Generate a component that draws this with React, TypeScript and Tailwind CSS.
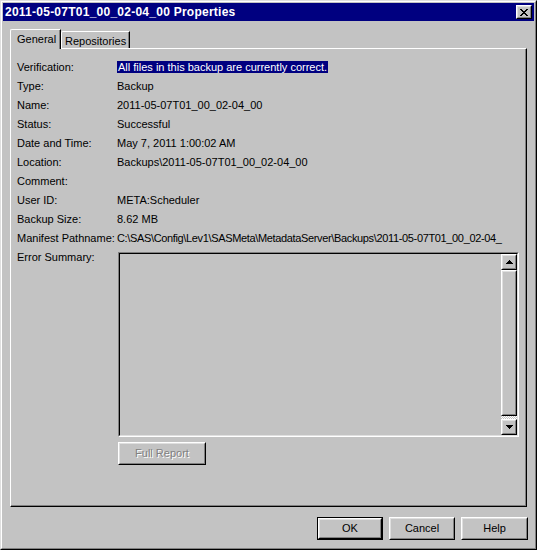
import type { ReactNode } from 'react'

const ROWS: [string, ReactNode][] = [
  ['Verification:', <span className="bg-[#000080] px-px text-white">All files in this backup are currently correct.</span>],
  ['Type:', 'Backup'],
  ['Name:', '2011-05-07T01_00_02-04_00'],
  ['Status:', 'Successful'],
  ['Date and Time:', 'May 7, 2011 1:00:02 AM'],
  ['Location:', 'Backups\\2011-05-07T01_00_02-04_00'],
  ['Comment:', ''],
  ['User ID:', 'META:Scheduler'],
  ['Backup Size:', '8.62 MB'],
  [
    'Manifest Pathname:',
    <span className="tracking-[-0.35px]">C:\SAS\Config\Lev1\SASMeta\MetadataServer\Backups\2011-05-07T01_00_02-04_</span>,
  ],
]

// classic raised bevel: outer white/black, inner light/dark gray
function Raised({ className = '', children }: { className?: string; children?: ReactNode }) {
  return (
    <div className={`border border-t-white border-l-white border-r-black border-b-black ${className}`}>
      <div className="flex h-full w-full items-center justify-center border border-t-[#dfdfdf] border-l-[#dfdfdf] border-r-[#808080] border-b-[#808080]">
        {children}
      </div>
    </div>
  )
}

function Arrow({ down }: { down?: boolean }) {
  return (
    <svg width="7" height="4" viewBox="0 0 7 4" shapeRendering="crispEdges" className={down ? 'rotate-180' : ''}>
      <rect x="3" y="0" width="1" height="1" fill="#000" />
      <rect x="2" y="1" width="3" height="1" fill="#000" />
      <rect x="1" y="2" width="5" height="1" fill="#000" />
      <rect x="0" y="3" width="7" height="1" fill="#000" />
    </svg>
  )
}

function CloseGlyph() {
  const px = [
    [0, 0], [1, 0], [6, 0], [7, 0],
    [1, 1], [2, 1], [5, 1], [6, 1],
    [2, 2], [3, 2], [4, 2], [5, 2],
    [3, 3], [4, 3],
    [2, 4], [3, 4], [4, 4], [5, 4],
    [1, 5], [2, 5], [5, 5], [6, 5],
    [0, 6], [1, 6], [6, 6], [7, 6],
  ]
  return (
    <svg width="8" height="7" viewBox="0 0 8 7" shapeRendering="crispEdges">
      {px.map(([x, y]) => (
        <rect key={`${x}-${y}`} x={x} y={y} width="1" height="1" fill="#000" />
      ))}
    </svg>
  )
}

export default function App() {
  return (
    <div className="h-[550px] w-[537px] bg-[#c3c3c3] font-['Liberation_Sans',Arial,sans-serif] text-[11px] text-black">
      {/* window frame */}
      <div className="h-full w-full border border-t-[#dfdfdf] border-l-[#dfdfdf] border-r-black border-b-black">
        <div className="flex h-full w-full flex-col border border-t-white border-l-white border-r-[#808080] border-b-[#808080] p-px">
          {/* Title bar */}
          <div className="flex h-[18px] shrink-0 items-center justify-between bg-[#000080] pl-[2px] pr-[2px]">
            <span className="text-[12px] font-bold leading-none tracking-[0.25px] text-white">2011-05-07T01_00_02-04_00 Properties</span>
            <Raised className="h-[14px] w-[16px] bg-[#c3c3c3]">
              <CloseGlyph />
            </Raised>
          </div>

          <div className="flex flex-1 flex-col pl-[7px] pt-[8px]">
            {/* Tabs */}
            <div className="relative z-10 flex h-[19px] items-end">
              <div className="-mb-px h-[20px] w-[51px] rounded-tl-[2px] border-l border-t border-r border-l-white border-t-white border-r-black bg-[#c3c3c3]">
                <div className="h-full border-r border-r-[#808080] pl-[6px] pt-[2px] leading-[14px]">General</div>
              </div>
              <div className="h-[17px] w-[69px] rounded-tl-[2px] border-l border-t border-r border-l-white border-t-white border-r-black">
                <div className="h-full border-r border-r-[#808080] pl-[3px] pt-[2px] leading-[14px]">Repositories</div>
              </div>
            </div>

            {/* Panel */}
            <div className="h-[459px] w-[517px] border border-t-white border-l-white border-r-black border-b-black">
              <div className="flex h-full w-full flex-col border-r border-b border-r-[#808080] border-b-[#808080] pl-[6px] pt-[9px]">
                {ROWS.map(([label, value]) => (
                  <div key={label} className="flex h-[19px] items-center whitespace-nowrap leading-[13px]">
                    <span className="w-[100px] shrink-0">{label}</span>
                    <span className="w-[400px]">{value}</span>
                  </div>
                ))}
                <div className="flex">
                  <span className="w-[101px] shrink-0 pt-[3px] leading-[13px]">Error Summary:</span>
                  <div className="flex flex-col">
                    <div className="mt-[4px] h-[185px] w-[401px] border border-t-[#808080] border-l-[#808080] border-r-white border-b-white">
                      <div className="flex h-full w-full justify-end border border-t-black border-l-black border-r-[#dfdfdf] border-b-[#dfdfdf]">
                        <div className="flex h-full w-[16px] flex-col">
                          <Raised className="h-[16px] w-[16px] shrink-0">
                            <Arrow />
                          </Raised>
                          <Raised className="w-[16px] flex-1" />
                          <div className="h-[3px] bg-[repeating-conic-gradient(#fff_0_25%,#c3c3c3_0_50%)] bg-[length:2px_2px]" />
                          <Raised className="h-[16px] w-[16px] shrink-0">
                            <Arrow down />
                          </Raised>
                        </div>
                      </div>
                    </div>
                    <Raised className="mt-[5px] h-[23px] w-[88px]">
                      <span className="text-[#808080] [text-shadow:1px_1px_0_#fff]">Full Report</span>
                    </Raised>
                  </div>
                </div>
              </div>
            </div>

            {/* Buttons */}
            <div className="mt-[10px] flex w-[518px] justify-end gap-[6px]">
              <div className="border border-black">
                <Raised className="h-[21px] w-[64px]">OK</Raised>
              </div>
              <Raised className="h-[23px] w-[66px]">Cancel</Raised>
              <Raised className="h-[23px] w-[67px]">Help</Raised>
            </div>
          </div>
        </div>
      </div>
    </div>
  )
}
